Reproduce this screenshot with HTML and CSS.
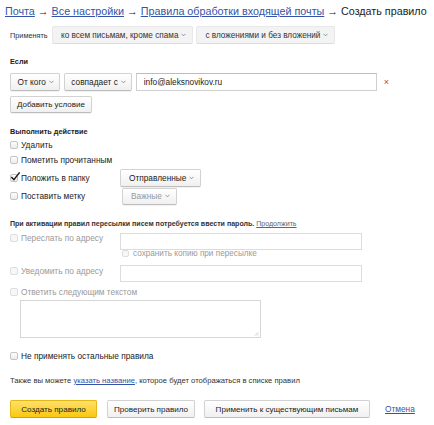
FILE: index.html
```html
<!DOCTYPE html>
<html lang="ru">
<head>
<meta charset="utf-8">
<title>Создать правило</title>
<link rel="stylesheet" href="styles.css">
</head>
<body>
<div class="page">
  <div class="crumbs"><a href="#">Почта</a> → <a href="#">Все настройки</a> → <a href="#">Правила обработки входящей почты</a> → Создать правило</div>

  <div class="apply">
    <span class="tiny">Применять</span>
    <span class="sel">ко всем письмам, кроме спама <svg class="chev" viewBox="0 0 6 4"><path d="M0.6 0.6 L3 3 L5.4 0.6"/></svg></span>
    <span class="sel">с вложениями и без вложений <svg class="chev" viewBox="0 0 6 4"><path d="M0.6 0.6 L3 3 L5.4 0.6"/></svg></span>
  </div>

  <div class="title t-if">Если</div>
  <div class="cond">
    <span class="btn">От кого <svg class="chev" viewBox="0 0 6 4"><path d="M0.6 0.6 L3 3 L5.4 0.6"/></svg></span>
    <span class="btn">совпадает с <svg class="chev" viewBox="0 0 6 4"><path d="M0.6 0.6 L3 3 L5.4 0.6"/></svg></span>
    <span class="input cond-input">info@aleksnovikov.ru</span>
    <span class="remove">×</span>
  </div>
  <div class="add-row"><span class="btn">Добавить условие</span></div>

  <div class="title t-do">Выполнить действие</div>
  <div class="chk-row r1"><span class="cb"></span><span class="lbl">Удалить</span></div>
  <div class="chk-row r2"><span class="cb"></span><span class="lbl">Пометить прочитанным</span></div>
  <div class="chk-row r3">
    <span class="cb checked"><svg viewBox="0 0 12 12"><path d="M1.5 6.5 L4.3 9.5 L10.5 1.5"/></svg></span>
    <span class="lbl col">Положить в папку</span>
    <span class="btn">Отправленные <svg class="chev" viewBox="0 0 6 4"><path d="M0.6 0.6 L3 3 L5.4 0.6"/></svg></span>
  </div>
  <div class="chk-row r4">
    <span class="cb"></span>
    <span class="lbl col">Поставить метку</span>
    <span class="btn disabled">Важные <svg class="chev" viewBox="0 0 6 4"><path d="M0.6 0.6 L3 3 L5.4 0.6"/></svg></span>
  </div>

  <div class="notice">При активации правил пересылки писем потребуется ввести пароль. <a href="#" class="gray-link">Продолжить</a></div>

  <div class="fwd-row f1">
    <span class="cb off"></span><span class="lbl col dis">Переслать по адресу</span>
    <span class="input wide"></span>
  </div>
  <div class="copy-row"><span class="cb off small"></span><span class="lbl dis">сохранить копию при пересылке</span></div>
  <div class="fwd-row f2">
    <span class="cb off"></span><span class="lbl col dis">Уведомить по адресу</span>
    <span class="input wide"></span>
  </div>
  <div class="chk-row reply"><span class="cb off"></span><span class="lbl dis">Ответить следующим текстом</span></div>
  <div class="textarea"><svg class="grip" viewBox="0 0 5 5"><path d="M4.5 1 L1 4.5 M4.5 3 L3 4.5"/></svg></div>

  <div class="chk-row noapply"><span class="cb"></span><span class="lbl">Не применять остальные правила</span></div>

  <div class="also">Также вы можете <a href="#">указать название</a>, которое будет отображаться в списке правил</div>

  <div class="actions">
    <span class="btn big yellow w-create">Создать правило</span>
    <span class="btn big w-check">Проверить правило</span>
    <span class="btn big w-apply">Применить к существующим письмам</span>
    <a href="#" class="cancel">Отмена</a>
  </div>
</div>
</body>
</html>
```

FILE: styles.css
```css
html, body {
  margin: 0;
  padding: 0;
  background: #fff;
}
body {
  font-family: "Liberation Sans", Arial, sans-serif;
  color: #222;
}
.page {
  padding-left: 10px;
  width: 434px;
  box-sizing: border-box;
}
a {
  color: #3453a8;
  text-decoration: underline;
}
.crumbs {
  margin-left: -5px;
  height: 22px;
  line-height: 22px;
  font-size: 10.75px;
  white-space: nowrap;
  color: #222;
}
.apply {
  margin-top: 4px;
  display: flex;
  align-items: center;
  height: 18px;
}
.tiny {
  font-size: 7.3px;
  width: 42px;
  color: #333;
}
.sel {
  height: 18px;
  box-sizing: border-box;
  display: inline-flex;
  align-items: center;
  padding: 0 6px 0 8px;
  margin-right: 3px;
  background: #f3f3f3;
  border: 1px solid #e8e8e8;
  border-bottom-color: #dcdcdc;
  border-radius: 2px;
  font-size: 8.2px;
  color: #333;
  white-space: nowrap;
}
.chev {
  width: 5px;
  height: 4px;
  margin-left: 3px;
  fill: none;
  stroke: #777;
  stroke-width: 0.9;
}
.title {
  font-size: 7.3px;
  font-weight: bold;
  line-height: 12px;
  color: #222;
}
.t-if {
  margin-top: 12px;
}
.cond {
  margin-top: 5px;
  display: flex;
  align-items: center;
  height: 18px;
}
.btn {
  height: 18px;
  box-sizing: border-box;
  display: inline-flex;
  align-items: center;
  justify-content: center;
  padding: 0 6px 0 8px;
  background: linear-gradient(#ffffff, #f0f0f0);
  border: 1px solid #d2d2d2;
  border-bottom-color: #bdbdbd;
  border-radius: 2px;
  box-shadow: 0 1px 1px rgba(0, 0, 0, 0.06);
  font-size: 8.3px;
  color: #222;
  white-space: nowrap;
}
.cond .btn {
  margin-right: 4px;
  padding: 0 5px 0 6.5px;
}
.input {
  height: 18px;
  box-sizing: border-box;
  display: inline-flex;
  align-items: center;
  border: 1px solid #cfcfcf;
  border-top-color: #bdbdbd;
  background: #fff;
  font-size: 8.3px;
  padding-left: 7px;
  color: #222;
}
.cond-input {
  width: 241px;
}
.remove {
  margin-left: 7px;
  color: #c8404a;
  font-size: 9px;
  line-height: 18px;
}
.add-row {
  margin-top: 5px;
  display: flex;
  height: 17px;
}
.add-row .btn {
  height: 17px;
  padding: 0 6px;
  font-size: 8px;
}
.t-do {
  margin-top: 13px;
}
.chk-row {
  display: flex;
  align-items: center;
}
.r1 { height: 13px; }
.r2 { height: 17px; }
.r3 { height: 19px; }
.r4 { height: 18px; }
.r4 .btn { height: 17px; margin-left: 2px; }
.cb {
  position: relative;
  width: 8px;
  height: 8px;
  box-sizing: border-box;
  border: 1px solid #c4c4c4;
  border-radius: 2px;
  background: linear-gradient(#fdfdfd, #ececec);
  margin-right: 3px;
  flex: none;
}
.cb.off {
  border-color: #dedede;
  background: #f7f7f7;
}
.cb.small {
  width: 7px;
  height: 7px;
  margin-right: 4px;
}
.cb.checked svg {
  position: absolute;
  left: -1px;
  top: -4px;
  width: 11px;
  height: 11px;
  fill: none;
  stroke: #1a1a1a;
  stroke-width: 1.6;
}
.lbl {
  font-size: 8.3px;
  color: #222;
  white-space: nowrap;
}
.lbl.col {
  width: 99px;
}
.lbl.dis {
  color: #9a9a9a;
}
.btn.disabled {
  color: #999;
}
.notice {
  margin-top: 13px;
  font-size: 7.05px;
  font-weight: bold;
  line-height: 12px;
  color: #333;
  white-space: nowrap;
}
.gray-link {
  color: #666;
  font-weight: normal;
}
.fwd-row {
  display: flex;
  align-items: flex-start;
  height: 19px;
}
.fwd-row .cb {
  margin-top: 3px;
}
.fwd-row .lbl {
  line-height: 14px;
}
.f1 {
  margin-top: 1px;
}
.f1 .input {
  margin-top: 2px;
}
.f2 {
  margin-top: 6px;
}
.f2 .input {
  margin-top: 1px;
}
.input.wide {
  width: 242px;
  height: 17px;
  border-color: #dcdcdc;
}
.copy-row {
  display: flex;
  align-items: center;
  margin-left: 112px;
  height: 9px;
  margin-top: -1px;
}
.copy-row .lbl {
  font-size: 8.2px;
}
.reply {
  margin-top: 3px;
  height: 12px;
}
.textarea {
  position: relative;
  margin-top: 2px;
  margin-left: 10px;
  width: 241px;
  height: 38px;
  box-sizing: border-box;
  border: 1px solid #d6d6d6;
  background: #fff;
}
.grip {
  position: absolute;
  right: 1px;
  bottom: 1px;
  width: 5px;
  height: 5px;
  fill: none;
  stroke: #bbb;
  stroke-width: 0.7;
}
.noapply {
  margin-top: 12px;
  height: 12px;
}
.also {
  margin-top: 13px;
  font-size: 7.65px;
  line-height: 12px;
  color: #333;
  white-space: nowrap;
}
.actions {
  margin-top: 13px;
  display: flex;
  align-items: center;
  height: 18px;
}
.btn.big {
  height: 18px;
  padding: 0;
  margin-right: 9px;
  font-size: 8.1px;
}
.w-create { width: 87px; }
.w-check { width: 88px; }
.w-apply { width: 166px; }
.btn.yellow {
  background: linear-gradient(#ffe16a, #f9c811);
  border-color: #e6b817;
  border-bottom-color: #cfa300;
  margin-right: 10px;
}
.cancel {
  margin-left: 6px;
  font-size: 8.3px;
}
```
